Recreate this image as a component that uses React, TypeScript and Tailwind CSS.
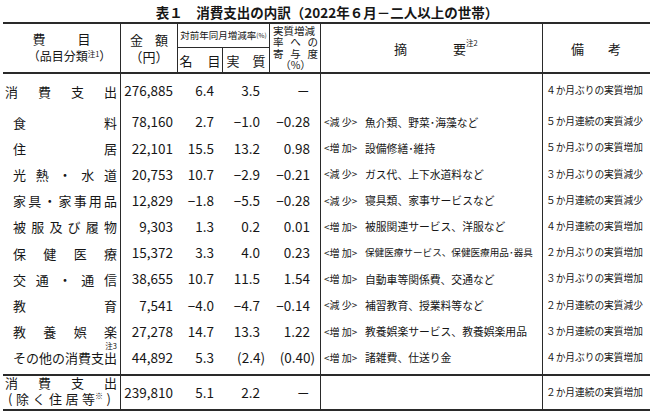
import React from "react";

type R = {
  label: string;
  amt: string;
  nom: string;
  real: string;
  con: string;
  tag?: string;
  desc?: string;
  note: string;
  small?: boolean;
  sup?: string;
};

const rows: R[] = [
  { label: "食料", amt: "78,160", nom: "2.7", real: "−1.0", con: "−0.28", tag: "<減 少>", desc: "魚介類、野菜･海藻など", note: "５か月連続の実質減少" },
  { label: "住居", amt: "22,101", nom: "15.5", real: "13.2", con: "0.98", tag: "<増 加>", desc: "設備修繕･維持", note: "５か月ぶりの実質増加" },
  { label: "光熱・水道", amt: "20,753", nom: "10.7", real: "−2.9", con: "−0.21", tag: "<減 少>", desc: "ガス代、上下水道料など", note: "３か月ぶりの実質減少" },
  { label: "家具・家事用品", amt: "12,829", nom: "−1.8", real: "−5.5", con: "−0.28", tag: "<減 少>", desc: "寝具類、家事サービスなど", note: "５か月連続の実質減少" },
  { label: "被服及び履物", amt: "9,303", nom: "1.3", real: "0.2", con: "0.01", tag: "<増 加>", desc: "被服関連サービス、洋服など", note: "４か月連続の実質増加" },
  { label: "保健医療", amt: "15,372", nom: "3.3", real: "4.0", con: "0.23", tag: "<増 加>", desc: "保健医療サービス、保健医療用品･器具", note: "２か月ぶりの実質増加", small: true },
  { label: "交通・通信", amt: "38,655", nom: "10.7", real: "11.5", con: "1.54", tag: "<増 加>", desc: "自動車等関係費、交通など", note: "３か月ぶりの実質増加" },
  { label: "教育", amt: "7,541", nom: "−4.0", real: "−4.7", con: "−0.14", tag: "<減 少>", desc: "補習教育、授業料等など", note: "２か月連続の実質減少" },
  { label: "教養娯楽", amt: "27,278", nom: "14.7", real: "13.3", con: "1.22", tag: "<増 加>", desc: "教養娯楽サービス、教養娯楽用品", note: "３か月連続の実質増加" },
  { label: "その他の消費支出", amt: "44,892", nom: "5.3", real: "(2.4)", con: "(0.40)", tag: "<増 加>", desc: "諸雑費、仕送り金", note: "４か月ぶりの実質増加", sup: "注3" },
];

function Spread({ text }: { text: string }) {
  return (
    <div className="flex w-full justify-between">
      {Array.from(text).map((c, i) => (
        <span key={i}>{c}</span>
      ))}
    </div>
  );
}

function Num({ v }: { v: string }) {
  if (v.startsWith("(")) {
    return (
      <span>
        {v.slice(0, -1)}
        <span className="-mr-[5px]">)</span>
      </span>
    );
  }
  return <span>{v}</span>;
}

function Spacer({ h }: { h: string }) {
  return (
    <div className={`flex ${h}`}>
      <div className="w-[118px] shrink-0 border-r border-[#2a2a2a]" />
      <div className="w-[200px] shrink-0 border-r border-[#2a2a2a]" />
      <div className="w-[222px] shrink-0 border-r border-[#2a2a2a]" />
      <div className="flex-1" />
    </div>
  );
}

function NumCells({ amt, nom, real, con }: { amt: string; nom: string; real: string; con: string }) {
  return (
    <>
      <div className="w-[57px] shrink-0 flex items-center justify-end pr-[5px] text-[13.5px] leading-none">
        <Num v={amt} />
      </div>
      <div className="w-[45px] shrink-0 flex items-center justify-end pr-[9px] text-[13.5px] leading-none">
        <Num v={nom} />
      </div>
      <div className="w-[47px] shrink-0 flex items-center justify-end pr-[10px] text-[13.5px] leading-none">
        <Num v={real} />
      </div>
      <div className="w-[51px] shrink-0 border-r border-[#2a2a2a] flex items-center justify-end pr-[10px] text-[13.5px] leading-none">
        <Num v={con} />
      </div>
    </>
  );
}

function DataRow({ r, first }: { r: R; first?: boolean }) {
  return (
    <div className={`flex ${first ? "h-[26px]" : "h-[26.2px]"}`}>
      <div
        className={`w-[118px] shrink-0 border-r border-[#2a2a2a] flex items-center pr-[3px] text-[13px] leading-none ${
          first ? "pl-[2px]" : "pl-[10px]"
        }`}
      >
        <div className="relative w-full">
          <Spread text={r.label} />
          {r.sup && (
            <span className="absolute right-0 -top-[9px] text-[7.5px] leading-none">{r.sup}</span>
          )}
        </div>
      </div>
      <NumCells amt={r.amt} nom={r.nom} real={r.real} con={r.con} />
      <div className="w-[222px] shrink-0 border-r border-[#2a2a2a] flex items-center pl-[3px] leading-none">
        {r.tag && <span className="w-[41px] shrink-0 text-[10px]">{r.tag}</span>}
        {r.desc && (
          <span className={`whitespace-nowrap ${r.small ? "text-[9.6px]" : "text-[10.8px]"}`}>{r.desc}</span>
        )}
      </div>
      <div className="flex-1 flex items-center pl-[3px] text-[9.7px] leading-none whitespace-nowrap">{r.note}</div>
    </div>
  );
}

export default function App() {
  return (
    <div className="w-[650px] h-[414px] overflow-hidden bg-white text-[#161616] font-['Noto_Sans_CJK_JP',sans-serif]">
      <div className="h-[22px] flex justify-center pt-[4px] pl-[4px] text-[13.5px] leading-[16px] font-bold whitespace-nowrap">
        表１　消費支出の内訳（2022年６月－二人以上の世帯）
      </div>
      <div className="ml-[3px] w-[700px] border-t-2 border-[#2a2a2a]">
        {/* header */}
        <div className="flex h-[50px] border-b-2 border-[#2a2a2a]">
          <div className="w-[118px] shrink-0 border-r border-[#2a2a2a] flex flex-col items-center justify-center">
            <div className="flex gap-[32px] text-[13px] leading-[17px]">
              <span>費</span>
              <span>目</span>
            </div>
            <div className="ml-[16px] text-[12px] leading-[17px] whitespace-nowrap">
              （品目分類<span className="relative -top-[4px] text-[7.5px]">注1</span>）
            </div>
          </div>
          <div className="w-[57px] shrink-0 border-r border-[#2a2a2a] flex flex-col items-center justify-center text-[13px] leading-[17px]">
            <div className="flex gap-[12px]">
              <span>金</span>
              <span>額</span>
            </div>
            <div>（円）</div>
          </div>
          <div className="w-[92px] shrink-0 border-r border-[#2a2a2a] flex flex-col">
            <div className="h-[24px] border-b border-[#2a2a2a] flex items-center justify-center text-[9.5px] leading-none whitespace-nowrap">
              対前年同月増減率<span className="text-[6.5px]">(%)</span>
            </div>
            <div className="flex flex-1 text-[13px] leading-none">
              <div className="w-[45px] shrink-0 border-r border-[#2a2a2a] flex items-center justify-center gap-[15px]">
                <span>名</span>
                <span>目</span>
              </div>
              <div className="flex-1 flex items-center justify-center gap-[13px]">
                <span>実</span>
                <span>質</span>
              </div>
            </div>
          </div>
          <div className="w-[51px] shrink-0 border-r border-[#2a2a2a] flex flex-col justify-center pl-[3px] pr-[2px] text-[10.5px] leading-none">
            <div className="h-[11.5px] shrink-0 flex items-center whitespace-nowrap">実質増減</div>
            <div className="h-[11.5px] shrink-0 flex items-center justify-between">
              <span>率</span>
              <span>へ</span>
              <span>の</span>
            </div>
            <div className="h-[11.5px] shrink-0 flex items-center justify-between">
              <span>寄</span>
              <span>与</span>
              <span>度</span>
            </div>
            <div className="h-[11.5px] shrink-0 flex items-center justify-center whitespace-nowrap">（%）</div>
          </div>
          <div className="w-[222px] shrink-0 border-r border-[#2a2a2a] flex items-center pl-[73px] text-[13px] leading-none">
            <span>摘</span>
            <span className="ml-[46px]">要</span>
            <span className="relative -top-[5px] text-[7.5px]">注2</span>
          </div>
          <div className="flex-1 flex items-center pl-[28px] gap-[24px] text-[13px] leading-none">
            <span>備</span>
            <span>考</span>
          </div>
        </div>

        {/* body */}
        <Spacer h="h-[4px]" />
        <DataRow
          first
          r={{ label: "消費支出", amt: "276,885", nom: "6.4", real: "3.5", con: "－", note: "４か月ぶりの実質増加" }}
        />
        <Spacer h="h-[5px]" />
        {rows.map((r, i) => (
          <DataRow key={i} r={r} />
        ))}
        <Spacer h="h-[3px]" />

        {/* last row */}
        <div className="flex h-[37px] border-t-2 border-b-2 border-[#2a2a2a]">
          <div className="w-[118px] shrink-0 border-r border-[#2a2a2a] flex flex-col justify-center pl-[2px] pr-[3px] text-[13px] leading-[16px]">
            <Spread text="消費支出" />
            <div className="flex justify-between pl-[3px] pr-[6px]">
              <span>(</span>
              <span>除</span>
              <span>く</span>
              <span>住</span>
              <span>居</span>
              <span>
                等<span className="relative -top-[5px] text-[8px]">※</span>
              </span>
              <span>)</span>
            </div>
          </div>
          <NumCells amt="239,810" nom="5.1" real="2.2" con="－" />
          <div className="w-[222px] shrink-0 border-r border-[#2a2a2a]" />
          <div className="flex-1 flex items-center pl-[3px] text-[9.7px] leading-none whitespace-nowrap">
            ２か月連続の実質増加
          </div>
        </div>
      </div>
    </div>
  );
}
